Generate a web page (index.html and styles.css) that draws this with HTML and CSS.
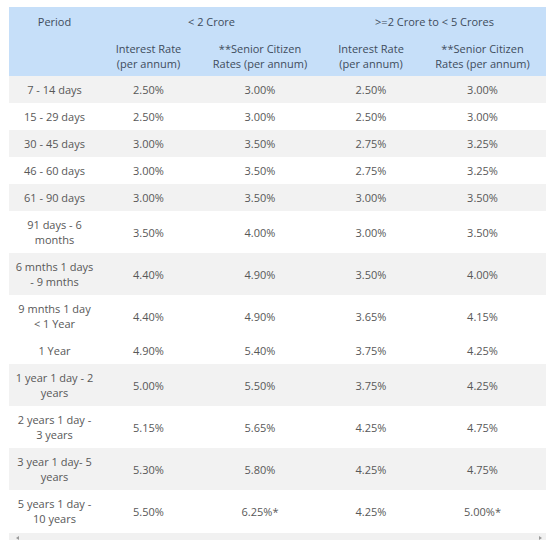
FILE: index.html
```html
<!DOCTYPE html>
<html>
<head>
<meta charset="utf-8">
<link rel="stylesheet" href="styles.css">
</head>
<body>
<div class="wrap">
  <table class="rates">
    <colgroup>
      <col class="c1"><col class="c2"><col class="c3"><col class="c4"><col class="c5">
    </colgroup>
    <thead>
      <tr class="h1">
        <th>Period</th>
        <th colspan="2">&lt; 2 Crore</th>
        <th colspan="2">&gt;=2 Crore to &lt; 5 Crores</th>
      </tr>
      <tr class="h2">
        <th></th>
        <th>Interest Rate<br>(per annum)</th>
        <th>**Senior Citizen<br>Rates (per annum)</th>
        <th>Interest Rate<br>(per annum)</th>
        <th>**Senior Citizen<br>Rates (per annum)</th>
      </tr>
    </thead>
    <tbody>
      <tr class="g"><td>7 - 14 days</td><td>2.50%</td><td>3.00%</td><td>2.50%</td><td>3.00%</td></tr>
      <tr><td>15 - 29 days</td><td>2.50%</td><td>3.00%</td><td>2.50%</td><td>3.00%</td></tr>
      <tr class="g"><td>30 - 45 days</td><td>3.00%</td><td>3.50%</td><td>2.75%</td><td>3.25%</td></tr>
      <tr><td>46 - 60 days</td><td>3.00%</td><td>3.50%</td><td>2.75%</td><td>3.25%</td></tr>
      <tr class="g"><td>61 - 90 days</td><td>3.00%</td><td>3.50%</td><td>3.00%</td><td>3.50%</td></tr>
      <tr><td>91 days - 6<br>months</td><td>3.50%</td><td>4.00%</td><td>3.00%</td><td>3.50%</td></tr>
      <tr class="g"><td>6 mnths 1 days<br>- 9 mnths</td><td>4.40%</td><td>4.90%</td><td>3.50%</td><td>4.00%</td></tr>
      <tr><td>9 mnths 1 day<br>&lt; 1 Year</td><td>4.40%</td><td>4.90%</td><td>3.65%</td><td>4.15%</td></tr>
      <tr><td>1 Year</td><td>4.90%</td><td>5.40%</td><td>3.75%</td><td>4.25%</td></tr>
      <tr class="g"><td>1 year 1 day - 2<br>years</td><td>5.00%</td><td>5.50%</td><td>3.75%</td><td>4.25%</td></tr>
      <tr><td>2 years 1 day -<br>3 years</td><td>5.15%</td><td>5.65%</td><td>4.25%</td><td>4.75%</td></tr>
      <tr class="g"><td>3 year 1 day- 5<br>years</td><td>5.30%</td><td>5.80%</td><td>4.25%</td><td>4.75%</td></tr>
      <tr><td>5 years 1 day -<br>10 years</td><td>5.50%</td><td>6.25%*</td><td>4.25%</td><td>5.00%*</td></tr>
    </tbody>
  </table>
  <div class="scrollbar">
    <span class="arrow left"></span>
    <span class="arrow right"></span>
  </div>
</div>
</body>
</html>
```
FILE: styles.css
```css
html, body {
  margin: 0;
  padding: 0;
  background: #ffffff;
}
body {
  font-family: "Open Sans", "Liberation Sans", sans-serif;
  font-size: 11px;
}
.wrap {
  padding: 7px 0 0 9px;
  width: 537px;
}
.rates {
  width: 537px;
  border-collapse: collapse;
  table-layout: fixed;
}
.c1 { width: 91px; }
.c2 { width: 97px; }
.c3 { width: 126px; }
.c4 { width: 96px; }
.c5 { width: 127px; }
.rates th {
  background: #c6dff9;
  color: #3e4c5c;
  font-weight: normal;
  text-align: center;
  line-height: 15px;
}
.h1 th {
  padding: 7px 0;
  vertical-align: top;
}
.h2 th {
  padding: 5px 0;
  vertical-align: middle;
}
.rates td {
  color: #585858;
  text-align: center;
  vertical-align: middle;
  line-height: 15px;
  padding: 6px 0;
}
.rates tr.g td {
  background: #f2f2f2;
}
.scrollbar {
  position: relative;
  height: 9px;
  margin-top: 1px;
  background: #f1f1f1;
}
.arrow {
  position: absolute;
  top: 3px;
  width: 0;
  height: 0;
  border-top: 2px solid transparent;
  border-bottom: 2px solid transparent;
}
.arrow.left {
  left: 7px;
  border-right: 3px solid #9a9a9a;
}
.arrow.right {
  right: 4px;
  border-left: 3px solid #9a9a9a;
}
```
